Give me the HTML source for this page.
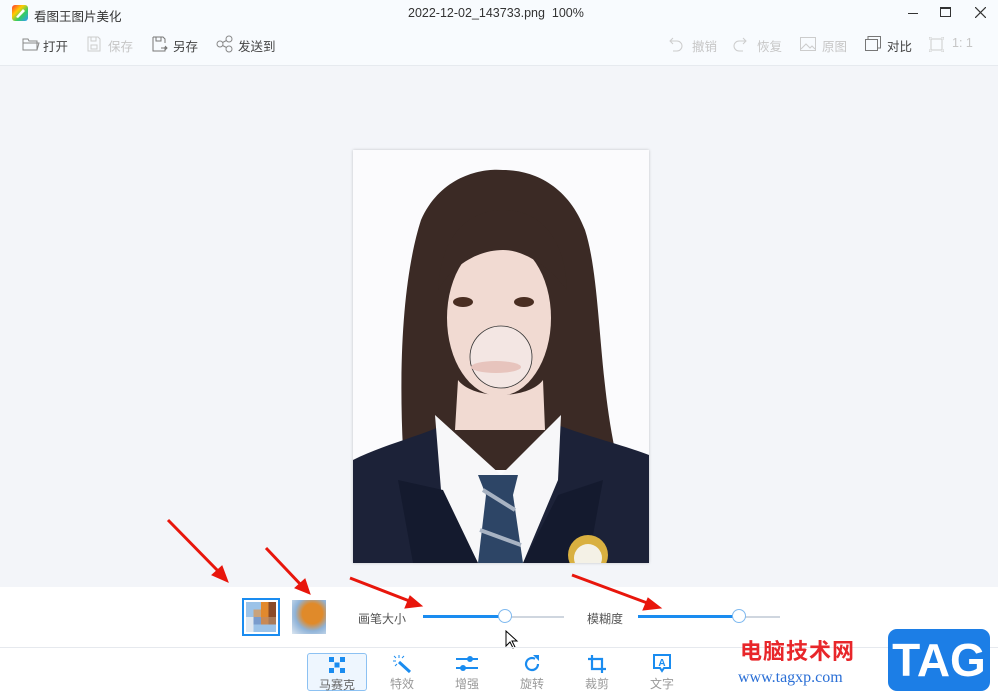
<!DOCTYPE html>
<html><head><meta charset="utf-8"><style>
*{margin:0;padding:0;box-sizing:border-box}
body{width:998px;height:696px;overflow:hidden;position:relative;background:#f3f5f9;font-family:"Liberation Sans","Noto Sans CJK SC",sans-serif;font-size:12px;color:#333}
.top{position:absolute;left:0;top:0;width:998px;height:66px;background:#f8fbfe;border-bottom:1px solid #e6eaef}
.a{position:absolute;white-space:nowrap}
.bot{position:absolute;left:0;top:587px;width:998px;height:109px;background:#fff}
.sep{position:absolute;left:0;top:647px;width:998px;height:1px;background:#e6e9ee}
.tool{position:absolute;top:653px;width:60px;height:38px;text-align:center;color:#999;font-size:12px}
.tool span{position:absolute;left:0;right:0;top:22px}
.t{font-size:12.5px}
</style></head><body>
<div class="top">
 <svg class="a" style="left:12px;top:5px" width="16" height="16" viewBox="0 0 16 16"><defs><linearGradient id="lg" x1="0" y1="0" x2="1" y2="1"><stop offset="0" stop-color="#f33"/><stop offset=".35" stop-color="#fc0"/><stop offset=".65" stop-color="#3c6"/><stop offset="1" stop-color="#39f"/></linearGradient></defs><rect width="16" height="16" rx="3" fill="url(#lg)"/><path d="M4 12 L11 4 L13 6 L6 13 Z" fill="#fff"/></svg>
 <div class="a" style="left:34px;top:6px;font-size:12.5px">看图王图片美化</div>
 <div class="a" style="left:408px;top:6px;font-size:12.5px">2022-12-02_143733.png&nbsp;&nbsp;100%</div>
 <div class="a" style="left:908px;top:13px;width:10px;height:1px;background:#333"></div>
 <div class="a" style="left:940px;top:7px;width:11px;height:10px;border:1px solid #333;border-top-width:2px"></div>
 <svg class="a" style="left:975px;top:7px" width="11" height="11"><path d="M0 0L11 11M11 0L0 11" stroke="#333" stroke-width="1.2"/></svg>
 <svg class="a" style="left:22px;top:37px" width="18" height="14"><path d="M1 2h5l1 2h8v9H1z M1 6h16l-2 7" fill="none" stroke="#888"/></svg>
 <div class="a t" style="left:43px;top:36px;color:#444">打开</div>
 <svg class="a" style="left:87px;top:36px" width="14" height="16"><path d="M1 1h10l2 2v12H1z M4 9h6v4H4z M4 1v4h5V1" fill="none" stroke="#ccc"/></svg>
 <div class="a t" style="left:108px;top:36px;color:#c6c6c6">保存</div>
 <svg class="a" style="left:152px;top:36px" width="17" height="16"><path d="M1 1h10l2 2v4 M13 11v4H1V1 M4 1v4h5V1 M9 12h6 M13 10l2 2-2 2" fill="none" stroke="#777"/></svg>
 <div class="a t" style="left:173px;top:36px;color:#444">另存</div>
 <svg class="a" style="left:216px;top:35px" width="17" height="18"><circle cx="4" cy="9" r="3" fill="none" stroke="#888"/><circle cx="13" cy="4" r="3" fill="none" stroke="#888"/><circle cx="13" cy="14" r="3" fill="none" stroke="#888"/><path d="M6.5 7.5L10.5 5.5M6.5 10.5L10.5 12.5" stroke="#888"/></svg>
 <div class="a t" style="left:238px;top:36px;color:#444">发送到</div>
 <svg class="a" style="left:668px;top:37px" width="15" height="15"><path d="M3 4h6a5 5 0 0 1 0 10H5 M5 1L2 4l3 3" fill="none" stroke="#ccc"/></svg>
 <div class="a t" style="left:692px;top:36px;color:#c6c6c6">撤销</div>
 <svg class="a" style="left:733px;top:37px" width="15" height="15"><path d="M12 4H6a5 5 0 0 0 0 10h4 M10 1l3 3-3 3" fill="none" stroke="#ccc"/></svg>
 <div class="a t" style="left:757px;top:36px;color:#c6c6c6">恢复</div>
 <svg class="a" style="left:800px;top:37px" width="16" height="14"><rect x=".5" y=".5" width="15" height="13" fill="none" stroke="#ccc"/><path d="M1 12l5-5 4 4 2-2 3 3" fill="none" stroke="#ccc"/></svg>
 <div class="a t" style="left:822px;top:36px;color:#c6c6c6">原图</div>
 <svg class="a" style="left:865px;top:36px" width="16" height="15"><rect x=".5" y="3.5" width="12" height="11" fill="none" stroke="#777"/><path d="M3 3V.5h12.5V12H13" fill="none" stroke="#777"/></svg>
 <div class="a t" style="left:887px;top:36px;color:#444">对比</div>
 <svg class="a" style="left:929px;top:37px" width="15" height="15"><rect x="2" y="2" width="11" height="11" fill="none" stroke="#ccc"/><path d="M0 3V0h3M12 0h3v3M15 12v3h-3M3 15H0v-3" fill="none" stroke="#ccc"/></svg>
 <div class="a t" style="left:952px;top:36px;color:#c6c6c6">1: 1</div>
</div>

<svg class="a" style="left:353px;top:150px;box-shadow:0 0 3px rgba(0,0,0,.2)" width="296" height="413" viewBox="0 0 296 413">
 <rect width="296" height="413" fill="#fbfbfd"/>
 <path d="M50 300 C45 200 52 120 68 70 C88 25 130 18 150 20 C180 20 215 35 232 80 C248 130 245 220 262 300 L240 320 L60 320Z" fill="#3b2a25"/>
 <ellipse cx="146" cy="168" rx="52" ry="78" fill="#f1dad2"/>
 <path d="M85 140 C88 80 120 60 150 60 C185 60 212 85 214 140 C195 115 170 100 150 100 C125 100 100 115 85 140Z" fill="#3b2a25"/>
 <ellipse cx="110" cy="152" rx="10" ry="5" fill="#4a2e22"/><ellipse cx="171" cy="152" rx="10" ry="5" fill="#4a2e22"/>
 <path d="M105 230 C120 250 175 250 190 230 L192 280 L102 280Z" fill="#f1dad2"/>
 <circle cx="148" cy="207" r="31" fill="#f3e6e3" stroke="#333" stroke-width=".8"/>
 <ellipse cx="143" cy="217" rx="25" ry="6" fill="#e7c4bd"/>
 <path d="M0 310 C30 295 70 285 90 275 L148 330 L205 275 C230 285 270 295 296 305 V413 H0Z" fill="#1c2238"/>
 <path d="M82 265 L148 325 L208 265 L205 330 L170 413 L125 413 L88 340Z" fill="#f7f7f9"/>
 <path d="M125 325 L165 325 L160 345 L170 413 L125 413 L133 345Z" fill="#2d4566"/>
 <path d="M130 340 L162 360 M127 380 L168 395" stroke="#a8b3c3" stroke-width="4"/>
 <path d="M45 330 L90 340 L125 413 L60 413Z M250 330 L205 345 L170 413 L235 413Z" fill="#141a2e"/>
 <circle cx="235" cy="405" r="20" fill="#d9b040"/><circle cx="235" cy="408" r="14" fill="#f4f1e6"/>
</svg>

<div class="bot">
 <div class="a" style="left:242px;top:11px;width:38px;height:38px;border:2px solid #1a8cf0;padding:2px">
  <svg width="30" height="30" viewBox="0 0 4 4" preserveAspectRatio="none" style="display:block"><rect width="4" height="4" fill="#9cc3e8"/><rect x="1" y="1" width="1" height="1" fill="#c9a37c"/><rect x="2" y="0" width="1" height="2" fill="#e2892d"/><rect x="3" y="0" width="1" height="2" fill="#8a4a28"/><rect x="2" y="2" width="1" height="1" fill="#c98a55"/><rect x="0" y="2" width="1" height="2" fill="#dfe7ef"/><rect x="1" y="2" width="1" height="1" fill="#7a9ccc"/><rect x="3" y="2" width="1" height="1" fill="#a77a5a"/></svg></div>
 <div class="a" style="left:292px;top:13px;width:34px;height:34px;background:radial-gradient(circle at 60% 40%,#e08a2a 0 35%,#8fb3d8 60%,#dbe6f1 100%)"></div>
 <div class="a" style="left:358px;top:23px;color:#555">画笔大小</div>
 <div class="a" style="left:423px;top:29px;width:141px;height:2px;background:#cfd6df"></div>
 <div class="a" style="left:423px;top:28px;width:83px;height:3px;background:#1a8cf0"></div>
 <div class="a" style="left:498px;top:22px;width:14px;height:14px;border-radius:50%;background:#fff;border:1px solid #7fb9ef"></div>
 <div class="a" style="left:587px;top:23px;color:#555">模糊度</div>
 <div class="a" style="left:638px;top:29px;width:142px;height:2px;background:#cfd6df"></div>
 <div class="a" style="left:638px;top:28px;width:101px;height:3px;background:#1a8cf0"></div>
 <div class="a" style="left:732px;top:22px;width:14px;height:14px;border-radius:50%;background:#fff;border:1px solid #7fb9ef"></div>
</div>
<svg class="a" style="left:505px;top:630px" width="14" height="20"><path d="M1 1v15l4-4 3 6 2-1-3-6h5z" fill="#fff" stroke="#000"/></svg>
<div class="sep"></div>

<div class="tool" style="left:307px;border:1px solid #8cc1f2;background:#eef6fe;border-radius:3px;color:#666">
 <svg style="margin-top:3px" width="16" height="16"><path d="M0 0h5v5H0zM11 0h5v5h-5zM5.5 5.5h5v5h-5zM0 11h5v5H0zM11 11h5v5h-5z" fill="#1a8cf0"/></svg><span>马赛克</span></div>
<div class="tool" style="left:372px"><svg style="margin-top:2px" width="20" height="18"><path d="M7 7L18 17" stroke="#1a8cf0" stroke-width="3"/><path d="M7 0v3M1 6h3M2 1l2 2M12 1l-2 2M3 11l2-2" stroke="#1a8cf0"/></svg><span>特效</span></div>
<div class="tool" style="left:437px"><svg style="margin-top:3px" width="22" height="16"><path d="M0 3h22M0 12h22" stroke="#1a8cf0" stroke-width="2"/><circle cx="14" cy="3" r="3" fill="#1a8cf0"/><circle cx="7" cy="12" r="3" fill="#1a8cf0"/></svg><span>增强</span></div>
<div class="tool" style="left:502px"><svg style="margin-top:2px" width="18" height="18"><path d="M15 9a6 6 0 1 1-3-5.2" fill="none" stroke="#1a8cf0" stroke-width="2.2"/><path d="M10 0h6v6z" fill="#1a8cf0"/></svg><span>旋转</span></div>
<div class="tool" style="left:567px"><svg style="margin-top:2px" width="18" height="18"><path d="M4 0v14h14M0 4h14v14" fill="none" stroke="#1a8cf0" stroke-width="2.2"/></svg><span>裁剪</span></div>
<div class="tool" style="left:632px"><svg style="margin-top:1px" width="18" height="19"><path d="M1 1h16v13h-6l-2 3-2-3H1z" fill="none" stroke="#1a8cf0" stroke-width="2"/><text x="9" y="12" font-size="10" font-weight="bold" text-anchor="middle" fill="#1a8cf0" font-family="Liberation Sans">A</text></svg><span>文字</span></div>

<svg class="a" style="left:0;top:0" width="998" height="696">
 <g fill="#e8160c" stroke="#e8160c">
  <path d="M168 520 L220 573" stroke-width="3"/><path d="M228 582 L212 575 L222 566Z"/>
  <path d="M266 548 L302 586" stroke-width="3"/><path d="M310 594 L295 588 L305 579Z"/>
  <path d="M350 578 L412 602" stroke-width="3"/><path d="M422 606 L405 608 L410 596Z"/>
  <path d="M572 575 L650 604" stroke-width="3"/><path d="M661 608 L643 610 L648 598Z"/>
 </g>
</svg>

<div class="a" style="left:740px;top:634px;font-size:22px;font-weight:bold;color:#e8262a;letter-spacing:1px">电脑技术网</div>
<div class="a" style="left:738px;top:669px;font-size:16px;color:#2a6fd6;font-family:'Liberation Serif',serif">www.tagxp.com</div>
<div class="a" style="left:888px;top:629px;width:102px;height:62px;background:#1c7ee6;border-radius:9px;color:#fff;font-size:46px;font-weight:bold;text-align:center;line-height:62px">TAG</div>
</body></html>
